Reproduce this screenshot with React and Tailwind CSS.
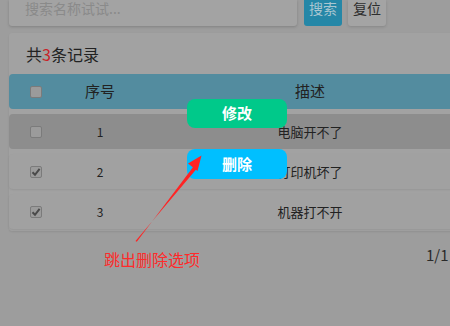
import React from "react";

const font = { fontFamily: '"Noto Sans CJK SC", "Noto Sans", sans-serif' };

const rows = [
  { id: 1, desc: "电脑开不了", checked: false, hover: true },
  { id: 2, desc: "打印机坏了", checked: true },
  { id: 3, desc: "机器打不开", checked: true },
];

const Box = ({ checked }) => (
  <span className="flex h-[12px] w-[12px] items-center justify-center rounded-[2px] border border-[#7b7b7b] bg-[#9b9b9b]">
    {checked && (
      <svg width="10" height="10" viewBox="0 0 10 10">
        <path d="M1.5 5.2 L4 7.8 L8.6 1.8" fill="none" stroke="#4a4a4a" strokeWidth="2" />
      </svg>
    )}
  </span>
);

const App = () => {
  return (
    <div className="relative h-[326px] w-[450px] overflow-hidden bg-[#9d9d9d] text-[#222]" style={font}>
      <div className="w-[490px]">
        {/* search bar, its top runs off the page */}
        <div className="flex items-end pl-[9px]">
          <div className="flex h-[26px] w-[288px] items-end rounded-b-[3px] bg-[#a3a3a3] pb-[10px] pl-[16px] text-[14px] leading-[16px] text-[#8a8a8a] shadow-[0_1px_3px_rgba(0,0,0,0.18)]">
            搜索名称试试...
          </div>
          <button className="ml-[7px] flex h-[26px] w-[38px] items-end justify-center rounded-b-[3px] bg-[#2587a7] pb-[10px] text-[14px] leading-[16px] text-[#a9c6d1]">
            搜索
          </button>
          <button className="ml-[6px] flex h-[26px] w-[38px] items-end justify-center rounded-b-[3px] bg-[#a4a4a4] pb-[10px] text-[14px] leading-[16px] text-[#2e2e2e] shadow-[0_1px_3px_rgba(0,0,0,0.15)]">
            复位
          </button>
        </div>

        {/* list card */}
        <div className="ml-[9px] mt-[7px] rounded-[3px] bg-[#a2a2a2] pb-[2px] shadow-[0_1px_2px_rgba(0,0,0,0.08)]">
          <div className="flex h-[41px] items-center pl-[17px] text-[16px]">
            共<span className="text-[#c8242a]">3</span>条记录
          </div>
          <div className="flex h-[35px] items-center rounded-[4px] bg-[#538c9f] text-[15px]">
            <div className="flex w-[50px] justify-center pl-[4px]">
              <Box />
            </div>
            <div className="w-[82px] text-center">序号</div>
            <div className="w-[338px] text-center">描述</div>
          </div>
          <div className="mt-[5px] flex flex-col gap-[5px]">
            {rows.map((r) => (
              <div
                key={r.id}
                className={`flex h-[35px] items-center rounded-[4px] text-[13px] ${
                  r.hover ? "bg-[#8d8d8d]" : "bg-[#a1a1a1] shadow-[0_1px_2px_rgba(0,0,0,0.08)]"
                }`}
              >
                <div className="flex w-[50px] justify-center pl-[4px]">
                  <Box checked={r.checked} />
                </div>
                <div className="w-[82px] text-center text-[12px]">{r.id}</div>
                <div className="w-[338px] text-center">{r.desc}</div>
              </div>
            ))}
          </div>
        </div>

        <div className="mt-[13px] flex justify-end pr-[40px] text-[15px] text-[#2a2a2a]">
          <span className="w-[24px]">1/1</span>
        </div>
      </div>

      {/* popup actions */}
      <button className="absolute left-[187px] top-[99px] h-[29px] w-[100px] rounded-[8px] bg-[#00c98a] text-[15px] font-bold text-white">
        修改
      </button>
      <button className="absolute left-[187px] top-[149px] h-[30px] w-[100px] rounded-[8px] bg-[#00bfff] text-[15px] font-bold text-white">
        删除
      </button>

      {/* annotation arrow */}
      <svg className="absolute left-0 top-0" width="450" height="326" viewBox="0 0 450 326">
        <path d="M135.5 241 L136.8 241.8 L193.5 166.5 L196.5 169 Z" fill="#ff2424" />
        <path d="M201.5 155.5 L188 163.5 L197.5 171 Z" fill="#ff2424" />
      </svg>
      <div className="absolute left-[104px] top-[249px] text-[16px] leading-[20px] text-[#ff2a2a]">
        跳出删除选项
      </div>
    </div>
  );
};

export default App;
